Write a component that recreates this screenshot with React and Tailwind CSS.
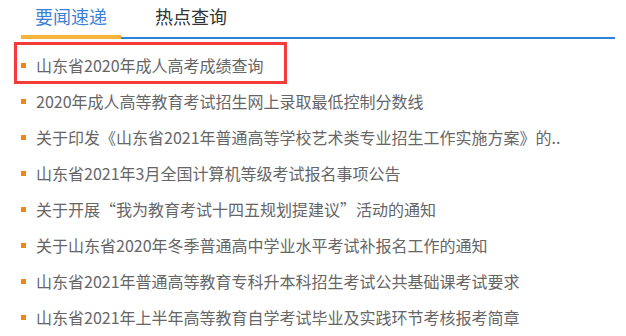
import React from "react";

const items = [
  "2020年成人高等教育考试招生网上录取最低控制分数线",
  "关于印发《山东省2021年普通高等学校艺术类专业招生工作实施方案》的..",
  "山东省2021年3月全国计算机等级考试报名事项公告",
  "关于开展“我为教育考试十四五规划提建议”活动的通知",
  "关于山东省2020年冬季普通高中学业水平考试补报名工作的通知",
  "山东省2021年普通高等教育专科升本科招生考试公共基础课考试要求",
  "山东省2021年上半年高等教育自学考试毕业及实践环节考核报考简章",
];

function Row({ text }) {
  return (
    <div className="flex items-center h-9">
      <span className="w-[5px] h-[5px] bg-[#f08519] shrink-0" />
      <span className="ml-[10px] text-[16px] text-[#666] whitespace-nowrap">{text}</span>
    </div>
  );
}

export default function App() {
  return (
    <div
      className="w-[626px] h-[336px] bg-white overflow-hidden"
      style={{ fontFamily: '"Microsoft YaHei", "Noto Sans CJK SC", sans-serif' }}
    >
      <div className="ml-[21px] w-[594px] h-[39px] flex border-b-2 border-[#2f80d9]">
        <div className="w-[100px] h-[39px] border-b-4 border-[#f7b33a] text-center text-[18px] leading-[33px] text-[#3b7fd6]">
          要闻速递
        </div>
        <div className="ml-[20px] w-[100px] text-center text-[18px] leading-[33px] text-[#333]">
          热点查询
        </div>
      </div>
      <div className="mt-[3px]">
        <div className="ml-[14px] w-[273px] h-[42px] border-[3px] border-[#f53a3a] pl-[4px] pt-[4px]">
          <div className="flex items-center h-[32px]">
            <span className="w-[5px] h-[5px] bg-[#f08519] shrink-0" />
            <span className="ml-[10px] text-[16px] text-[#666] whitespace-nowrap">
              山东省2020年成人高考成绩查询
            </span>
          </div>
        </div>
        <div className="pl-[21px] -mt-px">
          {items.map((t) => (
            <Row key={t} text={t} />
          ))}
        </div>
      </div>
    </div>
  );
}
